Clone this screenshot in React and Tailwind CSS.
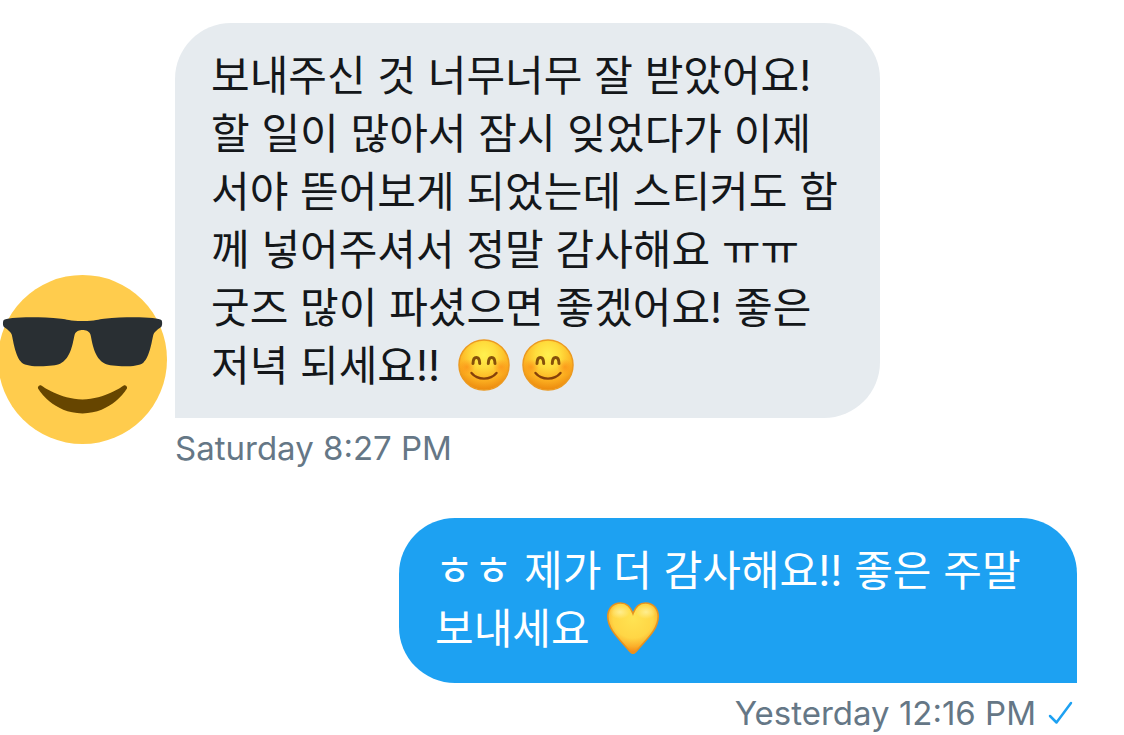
// =============================================================
//  App.jsx
//  Direct message conversation: received and sent bubbles.
// =============================================================

// ── Emoji ──

function SunglassesFace({ className }) {
    return (
        <svg viewBox="0 0 36 36" className={className} role="img" aria-label="Sunglasses face">
            <circle cx="18" cy="18" r="18" fill="#FFCC4D" />
            <path fill="#292F33" d="M1.24 11.018c.24.239 1.438.957 1.677 1.675.24.717.72 4.784 2.158 5.981 1.483 1.232 7.077.774 8.148.24 2.397-1.195 2.691-4.531 3.115-6.221.239-.957 1.677-.957 1.677-.957s1.438 0 1.678.956c.424 1.691.72 5.027 3.115 6.221 1.072.535 6.666.994 8.151-.238 1.436-1.197 1.915-5.263 2.155-5.981.238-.717 1.438-1.435 1.677-1.674.241-.239.241-1.196 0-1.436-.479-.478-6.134-.904-12.223-.239-1.215.133-1.677.478-4.554.478-2.875 0-3.339-.346-4.553-.478-6.085-.666-11.741-.24-12.221.239-.239.239-.239 1.197 0 1.436z" />
            <path fill="#664500" d="M27.335 23.629c-.178-.161-.444-.171-.635-.029-.039.029-3.922 2.9-8.7 2.9-4.766 0-8.662-2.871-8.7-2.9-.191-.142-.457-.13-.635.029-.177.16-.217.424-.094.628C8.7 24.472 11.788 29.5 18 29.5s9.301-5.028 9.429-5.243c.123-.205.084-.468-.094-.628z" />
        </svg>
    );
}

function SmilingFace({ className }) {
    return (
        <svg viewBox="0 0 52 52" className={className} role="img" aria-label="Smiling face">
            <defs>
                <radialGradient id="face" cx="0.5" cy="0.3" r="0.72">
                    <stop offset="0" stopColor="#FFF04F" />
                    <stop offset="0.35" stopColor="#FFDC3C" />
                    <stop offset="0.7" stopColor="#FCB021" />
                    <stop offset="1" stopColor="#EA850C" />
                </radialGradient>
                <radialGradient id="cheek">
                    <stop offset="0" stopColor="#FB8412" stopOpacity="0.6" />
                    <stop offset="1" stopColor="#FB8412" stopOpacity="0" />
                </radialGradient>
            </defs>
            <circle cx="26" cy="26" r="25" fill="url(#face)" stroke="#EC9A20" strokeWidth="1.5" />
            <circle cx="9" cy="28" r="8" fill="url(#cheek)" />
            <circle cx="43" cy="28" r="8" fill="url(#cheek)" />
            <path d="M15 24.500C15.200 16.500 21.500 16.500 21.700 24.500M30.300 24.500C30.500 16.500 36.800 16.500 37 24.500" fill="none" stroke="#85500A" strokeWidth="3" strokeLinecap="round" />
            <path d="M13.500 34c3.200 3.900 7.500 5.600 12.500 5.600s9.300-1.700 12.500-5.600" fill="none" stroke="#85400A" strokeWidth="2.400" strokeLinecap="round" />
        </svg>
    );
}

function YellowHeart({ className }) {
    return (
        <svg viewBox="0 0 52 52" className={className} role="img" aria-label="Yellow heart">
            <defs>
                <radialGradient id="heart" cx="0.5" cy="0.3" r="0.72">
                    <stop offset="0" stopColor="#FFE353" />
                    <stop offset="0.55" stopColor="#FFD645" />
                    <stop offset="0.78" stopColor="#FBAF2A" />
                    <stop offset="1" stopColor="#F07A0C" />
                </radialGradient>
                <radialGradient id="shine">
                    <stop offset="0" stopColor="#FFF3A0" stopOpacity="0.8" />
                    <stop offset="1" stopColor="#FFF3A0" stopOpacity="0" />
                </radialGradient>
            </defs>
            <path d="M26 11.500C23.500 4.500 19.500 1 13.500 1 6 1 .800 6.600.800 14.500.800 28 13.500 38 22.500 49c2.600 3.200 4.400 3.200 7 0C38.500 38 51.200 28 51.200 14.500 51.200 6.600 46 1 38.500 1 32.500 1 28.500 4.500 26 11.500z" fill="url(#heart)" stroke="#E8921E" strokeWidth="1.600" />
            <ellipse cx="13" cy="10" rx="10" ry="7" fill="url(#shine)" />
            <ellipse cx="39" cy="10" rx="10" ry="7" fill="url(#shine)" />
        </svg>
    );
}

// ── Messages ──

function ReceivedMessage({ time, children }) {
    return (
        <article className="flex items-end gap-2">
            <SunglassesFace className="-ml-0.5 mb-7 h-[169px] w-[169px] shrink-0" />
            <div className="min-w-0 flex-1">
                <p className="max-w-[705px] rounded-[56px] rounded-bl-none bg-[#e6ebef] px-9 pt-6 pb-[23px] text-[42px] leading-[58px] text-[#14171a]">{children}</p>
                <time className="block pt-1.5 text-[33px] leading-[48px] text-[#657786]">{time}</time>
            </div>
        </article>
    );
}

function SentMessage({ time, children }) {
    return (
        <article className="flex flex-col items-end pr-[47px]">
            <p className="w-full max-w-[678px] rounded-[56px] rounded-br-none bg-[#1da1f2] px-9 pt-6 pb-[25px] text-[42px] leading-[58px] text-white">{children}</p>
            <div className="flex items-center gap-3 pt-1.5 pr-1 text-[33px] leading-[48px] text-[#657786]">
                <time>{time}</time>
                <svg viewBox="0 0 25 24" className="h-6 w-[25px]" role="img" aria-label="Seen">
                    <path d="M2 15l6.500 6.500L23 2" fill="none" stroke="#1da1f2" strokeWidth="2.500" strokeLinecap="round" strokeLinejoin="round" />
                </svg>
            </div>
        </article>
    );
}

export default function App() {
    return (
        <main lang="ko" className="flex flex-col gap-[46px] overflow-hidden bg-white pt-[23px] font-['Inter','Noto_Sans_CJK_KR',sans-serif]">
            <ReceivedMessage time="Saturday 8:27 PM">
                보내주신 것 너무너무 잘 받았어요!<br />
                할 일이 많아서 잠시 잊었다가 이제<br />
                서야 뜯어보게 되었는데 스티커도 함<br />
                께 넣어주셔서 정말 감사해요 ㅠㅠ<br />
                굿즈 많이 파셨으면 좋겠어요! 좋은<br />
                저녁 되세요!!{" "}
                <SmilingFace className="mx-1.5 inline-block h-[52px] w-[52px] align-[-10px]" />
                <SmilingFace className="mx-1.5 inline-block h-[52px] w-[52px] align-[-10px]" />
            </ReceivedMessage>
            <SentMessage time="Yesterday 12:16 PM">
                ㅎㅎ 제가 더 감사해요!! 좋은 주말<br />
                보내세요 <YellowHeart className="mx-1.5 inline-block h-[52px] w-[52px] align-[-10px]" />
            </SentMessage>
        </main>
    );
}
